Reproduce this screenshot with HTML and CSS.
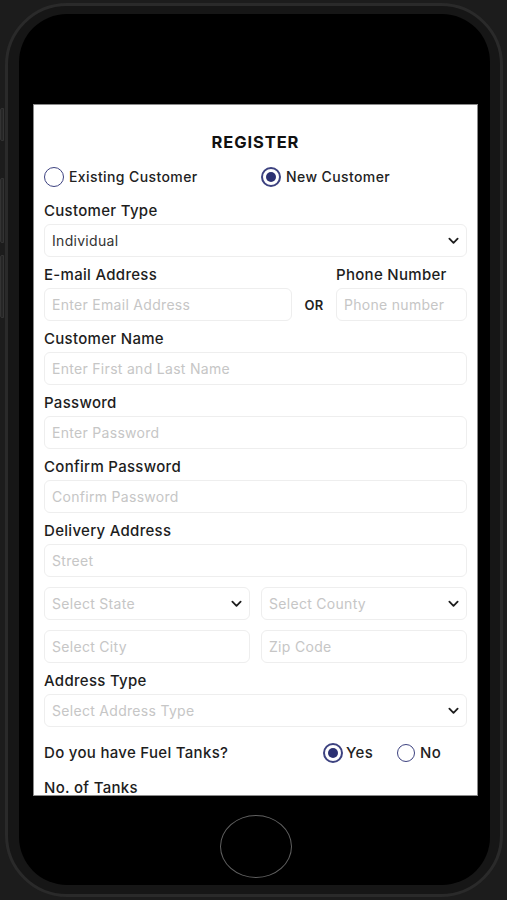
FILE: index.html
```html
<!DOCTYPE html>
<html lang="en">
<head>
    <meta charset="UTF-8">
    <title>Register</title>
    <link rel="stylesheet" href="styles.css">
</head>
<body>
    <div class="phone">
        <!-- side buttons -->
        <span class="side-btn mute"></span>
        <span class="side-btn vol-up"></span>
        <span class="side-btn vol-down"></span>

        <div class="bezel">
            <div class="screen">
                <h2 class="title">REGISTER</h2>

                <div class="radio-row">
                    <label class="radio-opt"><span class="radio"></span>Existing Customer</label>
                    <label class="radio-opt"><span class="radio checked"></span>New Customer</label>
                </div>

                <div class="field">
                    <label>Customer Type</label>
                    <div class="select filled">
                        <span>Individual</span>
                        <svg class="chev" viewBox="0 0 12 8"><path d="M1.5 1.5 6 6l4.5-4.5"/></svg>
                    </div>
                </div>

                <div class="contact-row">
                    <label class="c-email">E-mail Address</label>
                    <label class="c-phone">Phone Number</label>
                    <input type="text" placeholder="Enter Email Address">
                    <span class="or">OR</span>
                    <input type="text" placeholder="Phone number">
                </div>

                <div class="field">
                    <label>Customer Name</label>
                    <input type="text" placeholder="Enter First and Last Name">
                </div>

                <div class="field">
                    <label>Password</label>
                    <input type="text" placeholder="Enter Password">
                </div>

                <div class="field">
                    <label>Confirm Password</label>
                    <input type="text" placeholder="Confirm Password">
                </div>

                <div class="field">
                    <label>Delivery Address</label>
                    <input type="text" placeholder="Street">
                </div>

                <div class="pair">
                    <div class="select">
                        <span>Select State</span>
                        <svg class="chev" viewBox="0 0 12 8"><path d="M1.5 1.5 6 6l4.5-4.5"/></svg>
                    </div>
                    <div class="select">
                        <span>Select County</span>
                        <svg class="chev" viewBox="0 0 12 8"><path d="M1.5 1.5 6 6l4.5-4.5"/></svg>
                    </div>
                </div>

                <div class="pair">
                    <input type="text" placeholder="Select City">
                    <input type="text" placeholder="Zip Code">
                </div>

                <div class="field after-pair">
                    <label>Address Type</label>
                    <div class="select">
                        <span>Select Address Type</span>
                        <svg class="chev" viewBox="0 0 12 8"><path d="M1.5 1.5 6 6l4.5-4.5"/></svg>
                    </div>
                </div>

                <div class="tanks-row">
                    <span class="question">Do you have Fuel Tanks?</span>
                    <label class="radio-opt yes"><span class="radio checked"></span>Yes</label>
                    <label class="radio-opt no"><span class="radio"></span>No</label>
                </div>

                <div class="field tanks">
                    <label>No. of Tanks</label>
                    <input type="text" placeholder="Number of Tanks">
                </div>
            </div>

            <div class="home-btn"></div>
        </div>
    </div>
</body>
</html>
```

FILE: styles.css
```css
* { box-sizing: border-box; }
body { margin: 0; width: 507px; height: 900px; background: #1c1c1c; font-family: Inter, "Noto Sans", sans-serif; color: #1d1d1d; overflow: hidden; letter-spacing: 0.3px; }

.phone { position: relative; margin: 3px 4px 3px 5px; height: 894px; border-radius: 62px; background: #161616; border: 3px solid #2a2a2a; padding: 8px 10px 9px 11px; }
.side-btn { position: absolute; left: -8px; width: 4px; background: #262626; border: 1px solid #333; border-radius: 2px 0 0 2px; }
.mute { top: 102px; height: 33px; }
.vol-up { top: 172px; height: 65px; }
.vol-down { top: 249px; height: 63px; }

.bezel { height: 100%; background: #000; border-radius: 48px; padding: 90px 12px 0 14px; display: flex; flex-direction: column; align-items: center; }

.screen { width: 445px; height: 692px; flex: none; background: #fff; border: 1px solid #8a8a8a; overflow: hidden; padding: 27px 10px 0 10px; }

.title { margin: 0; font-size: 16.5px; line-height: 20px; font-weight: 700; text-align: center; letter-spacing: 0.9px; color: #111; }

.radio-row { display: grid; grid-template-columns: 1fr 1fr; gap: 11px; margin-top: 14px; }
.radio-opt { display: flex; align-items: center; gap: 5px; font-size: 14px; font-weight: 500; line-height: 22px; color: #222; letter-spacing: 0.4px; }
.radio { width: 20px; height: 20px; border-radius: 50%; border: 1.5px solid #3d4280; display: flex; align-items: center; justify-content: center; flex: none; }
.radio.checked { border-width: 2px; }
.radio.checked::after { content: ""; width: 10px; height: 10px; border-radius: 50%; background: #2b3072; }

.field { margin-top: 14px; }
.field + .field, .contact-row + .field { margin-top: 9px; }
.field label, .contact-row label { display: block; font-size: 15px; font-weight: 500; line-height: 18px; margin-bottom: 4px; color: #1d1d1d; }

input[type="text"], .select { width: 100%; height: 33px; border: 1px solid #eeeeee; border-radius: 6px; padding: 0 7px; font-family: inherit; font-size: 14px; letter-spacing: 0.3px; color: #333; background: #fff; outline: none; }
input::placeholder { color: #c6c6c6; }
.select { display: flex; align-items: center; justify-content: space-between; color: #c6c6c6; }
.select.filled { color: #333; }
.chev { width: 11px; height: 8px; fill: none; stroke: #1d1d1d; stroke-width: 2; stroke-linecap: round; stroke-linejoin: round; }

.contact-row { display: grid; grid-template-columns: 1fr 44px 131px; margin-top: 9px; align-items: center; }
.c-email { grid-column: 1 / 3; }
.c-phone { grid-column: 3; }
.or { text-align: center; font-size: 13px; font-weight: 600; color: #222; }

.pair { display: grid; grid-template-columns: 1fr 1fr; gap: 11px; margin-top: 10px; }
.field.after-pair { margin-top: 9px; }

.tanks-row { display: flex; align-items: center; margin-top: 15px; }
.question { flex: 1; font-size: 15px; font-weight: 500; line-height: 22px; }
.radio-opt.yes { width: 74px; font-size: 15px; gap: 3px; }
.radio-opt.no { width: 70px; font-size: 15px; }
.radio-opt.no .radio { width: 18px; height: 18px; }

.field.tanks { margin-top: 15px; }

.home-btn { margin-top: 19px; width: 72px; height: 63px; border-radius: 50%; border: 1.5px solid #606060; }
```
